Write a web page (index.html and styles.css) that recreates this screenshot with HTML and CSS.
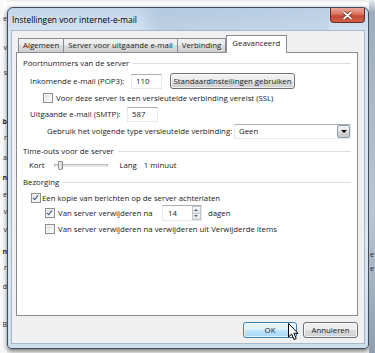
FILE: index.html
```html
<!DOCTYPE html>
<html lang="nl">
  <head>
    <meta charset="UTF-8" />
    <meta name="viewport" content="width=device-width, initial-scale=1.0" />
    <title>Instellingen voor internet-e-mail</title>
    <link rel="stylesheet" href="styles.css">
  </head>
  <body>
    <div class="screen">
      <div class="behind behind-left">
        <span>e</span>
        <span>v</span>
        <span>s</span>
        <span class="bold">b</span>
        <span>r</span>
        <span>a</span>
        <span class="bold">n</span>
        <span>e</span>
        <span>v</span>
        <span>v</span>
        <span class="bold">n</span>
        <span>r</span>
        <span>d</span>
        <span>B</span>
      </div>

      <div class="window">
        <div class="titlebar">
          <span class="title">Instellingen voor internet-e-mail</span>
          <span class="close">
            <svg width="11" height="9" viewBox="0 0 11 9">
              <path d="M1.5 1 L9.5 8 M9.5 1 L1.5 8" stroke="#5a1a10" stroke-width="3.2" />
              <path d="M1.5 1 L9.5 8 M9.5 1 L1.5 8" stroke="#fff" stroke-width="1.8" />
            </svg>
          </span>
        </div>

        <div class="client">
          <div class="tabs">
            <span class="tab">Algemeen</span>
            <span class="tab">Server voor uitgaande e-mail</span>
            <span class="tab">Verbinding</span>
            <span class="tab active">Geavanceerd</span>
          </div>

          <div class="panel">
            <div class="group-head head-ports"><span>Poortnummers van de server</span></div>

            <div class="row row-in">
              <span class="lbl lbl-in">Inkomende e-mail (POP3):</span>
              <span class="input port">110</span>
              <span class="btn btn-default">Standaardinstellingen gebruiken</span>
            </div>

            <div class="row row-ssl">
              <span class="check"></span>
              <span>Voor deze server is een versleutelde verbinding vereist (SSL)</span>
            </div>

            <div class="row row-out">
              <span class="lbl lbl-out">Uitgaande e-mail (SMTP):</span>
              <span class="input port">587</span>
            </div>

            <div class="row row-enc">
              <span>Gebruik het volgende type versleutelde verbinding:</span>
              <span class="select">
                <span class="select-value">Geen</span>
                <span class="select-arrow"></span>
              </span>
            </div>

            <div class="group-head head-time"><span>Time-outs voor de server</span></div>

            <div class="row row-slider">
              <span>Kort</span>
              <span class="slider">
                <span class="track"></span>
                <span class="thumb"></span>
              </span>
              <span>Lang</span>
              <span class="timeout">1 minuut</span>
            </div>

            <div class="group-head head-del"><span>Bezorging</span></div>

            <div class="row row-copy">
              <span class="check checked"></span>
              <span>Een kopie van berichten op de server achterlaten</span>
            </div>

            <div class="row row-days">
              <span class="check checked"></span>
              <span class="lbl lbl-days">Van server verwijderen na</span>
              <span class="spin">
                <span class="spin-value">14</span>
                <span class="spin-btns">
                  <span class="spin-up"></span>
                  <span class="spin-down"></span>
                </span>
              </span>
              <span class="days">dagen</span>
            </div>

            <div class="row row-deleted">
              <span class="check"></span>
              <span>Van server verwijderen na verwijderen uit Verwijderde items</span>
            </div>
          </div>

          <div class="actions">
            <span class="btn btn-ok">OK</span>
            <span class="btn btn-cancel">Annuleren</span>
          </div>
        </div>
      </div>

      <div class="behind behind-right">
        <span>e</span>
        <span>e</span>
      </div>

      <svg class="cursor" width="12" height="18" viewBox="0 0 12 18">
        <path d="M0.5 0.5 L0.5 14 L3.6 11 L6 16.5 L8.2 15.5 L5.9 10.3 L10 10.3 Z"
              fill="#fff" stroke="#000" stroke-width="1" stroke-linejoin="round" />
      </svg>
    </div>
  </body>
</html>
```

FILE: styles.css
```css
:root {
  --text: #202020;
  --tab-border: #898c95;
  --group-line: #d5dfe5;
  --client: #f0f0f0;
}

body {
  margin: 0;
  font-family: "Open Sans", "Noto Sans", sans-serif;
  font-size: 7.8px;
  color: var(--text);
  background: #f4f4f4;
}

.screen {
  position: relative;
  display: flex;
  width: 375px;
  height: 353px;
  overflow: hidden;
  background: linear-gradient(#ececec, #ffffff 4px, #f6f6f6 6px);
}

/* window behind the dialog */
.behind {
  display: flex;
  flex-direction: column;
  overflow: hidden;
  white-space: nowrap;
  line-height: 10px;
  font-size: 7px;
}

.behind-left {
  width: 7px;
  align-items: flex-end;
  background: linear-gradient(90deg, #f7f7f7, #ffffff);
  color: #2a2a2a;
}

.behind-left .bold {
  font-weight: bold;
}

.behind-left span:nth-child(1) { margin-top: 14px; }
.behind-left span:nth-child(2) { margin-top: 19px; }
.behind-left span:nth-child(3) { margin-top: 15px; }
.behind-left span:nth-child(4) { margin-top: 39px; }
.behind-left span:nth-child(5) { margin-top: 6px; }
.behind-left span:nth-child(6) { margin-top: 10px; }
.behind-left span:nth-child(7) { margin-top: 10px; }
.behind-left span:nth-child(8) { margin-top: 7px; }
.behind-left span:nth-child(9) { margin-top: 7px; }
.behind-left span:nth-child(10) { margin-top: 8px; }
.behind-left span:nth-child(11) { margin-top: 12px; }
.behind-left span:nth-child(12) { margin-top: 6px; }
.behind-left span:nth-child(13) { margin-top: 9px; }
.behind-left span:nth-child(14) { margin-top: 28px; }

.behind-right {
  width: 5px;
  padding-left: 1px;
  background: linear-gradient(#e8ecf0, #9eadbd 12px, #b9c6d3 60%, #8f9fb0);
  color: #222;
}

.behind-right span:nth-child(1) { margin-top: 250px; }
.behind-right span:nth-child(2) { margin-top: 4px; }

/* dialog */
.window {
  box-sizing: border-box;
  display: flex;
  flex-direction: column;
  width: 363px;
  height: 342px;
  margin-top: 7px;
  border: 1px solid #3f4d5e;
  border-radius: 6px 6px 4px 4px;
  background: linear-gradient(#c2d6ea, #d5e3f1 24px, #dbe7f3 70%, #cfdeed);
  box-shadow: 0 2px 5px rgba(0, 0, 0, 0.55);
}

.titlebar {
  display: flex;
  align-items: flex-start;
  height: 22px;
  padding-left: 4px;
  background: linear-gradient(90deg, transparent 130px, rgba(160, 185, 210, 0.45) 150px, rgba(175, 198, 222, 0.4) 320px, transparent 322px);
}

.title {
  margin-top: 5px;
  line-height: 14px;
  font-size: 8.4px;
  color: #000;
}

.close {
  display: flex;
  align-items: center;
  justify-content: center;
  box-sizing: border-box;
  width: 35px;
  height: 15px;
  margin-left: auto;
  margin-right: 3px;
  border: 1px solid #6d2a20;
  border-top: none;
  border-radius: 0 0 4px 4px;
  background: linear-gradient(#e9a99b, #d8735f 45%, #c44a33 55%, #d0604a);
}

.client {
  flex: 1;
  display: flex;
  flex-direction: column;
  margin: 0 3px 4px 3px;
  padding: 4px 6px 5px 4px;
  border: 1px solid #a9b9cb;
  background: var(--client);
}

/* tabs */
.tabs {
  display: flex;
  align-items: flex-end;
  height: 17px;
  padding-left: 2px;
}

.tab {
  box-sizing: border-box;
  height: 14px;
  padding: 0 4px;
  line-height: 13px;
  border: 1px solid var(--tab-border);
  border-bottom: none;
  border-left: none;
  background: linear-gradient(#f2f2f2, #ebebeb 50%, #dddddd 50%, #cfcfcf);
}

.tab:first-child {
  border-left: 1px solid var(--tab-border);
}

.tab.active {
  position: relative;
  z-index: 1;
  height: 18px;
  margin-bottom: -1px;
  padding: 0 6px 0 5px;
  line-height: 15px;
  border-left: 1px solid var(--tab-border);
  background: #fff;
}

.panel {
  box-sizing: border-box;
  display: flex;
  flex-direction: column;
  height: 264px;
  padding: 0 6px 0 6px;
  border: 1px solid var(--tab-border);
  background: #fff;
}

.group-head {
  display: flex;
  align-items: center;
  height: 12px;
}

.group-head::after {
  content: "";
  flex: 1;
  height: 1px;
  margin-left: 4px;
  background: var(--group-line);
}

.head-ports { margin-top: 4px; }
.head-time { margin-top: 6px; }
.head-del { margin-top: 4px; }

.row {
  display: flex;
  align-items: center;
  height: 16px;
  white-space: nowrap;
}

.row-in { margin-top: 4px; padding-left: 7px; }
.row-ssl { margin-top: 1px; padding-left: 20px; }
.row-out { padding-left: 7px; }
.row-enc { margin-top: 1px; padding-left: 24px; }
.row-slider { height: 14px; margin-top: 1px; padding-left: 6px; }
.row-copy { height: 14px; margin-top: 3px; padding-left: 8px; }
.row-days { padding-left: 22px; }
.row-deleted { height: 14px; margin-top: 1px; padding-left: 22px; }

.lbl-in { width: 101px; }
.lbl-out { width: 97px; }
.lbl-days { width: 104px; }

.input,
.select,
.spin {
  box-sizing: border-box;
  display: flex;
  align-items: center;
  height: 15px;
  border: 1px solid #e3e9ef;
  border-top-color: #abadb3;
  background: #fff;
}

.port {
  width: 31px;
  padding-left: 4px;
}

.btn {
  box-sizing: border-box;
  display: flex;
  align-items: center;
  justify-content: center;
  height: 16px;
  border: 1px solid #707070;
  border-radius: 3px;
  background: linear-gradient(#f2f2f2, #ebebeb 50%, #dddddd 50%, #cfcfcf);
  box-shadow: inset 0 0 0 1px rgba(255, 255, 255, 0.7);
}

.btn-default {
  width: 125px;
  margin-left: 8px;
}

/* checkboxes */
.check {
  box-sizing: border-box;
  display: flex;
  align-items: center;
  justify-content: center;
  width: 10px;
  height: 10px;
  margin-right: 3px;
  border: 1px solid #8e8f8f;
  background: linear-gradient(135deg, #dcdcdc, #f6f6f6 70%);
  box-shadow: inset 0 0 0 1px #f4f4f4;
}

.row-copy .check {
  margin-right: 1px;
}

.check.checked::after {
  content: "";
  width: 2px;
  height: 5px;
  margin-top: -2px;
  border: solid #3b5a8a;
  border-width: 0 1.5px 1.5px 0;
  transform: rotate(40deg);
}

/* select */
.select {
  width: 117px;
  margin-left: auto;
  padding-left: 4px;
}

.select-value {
  flex: 1;
}

.select-arrow {
  display: flex;
  align-items: center;
  justify-content: center;
  box-sizing: border-box;
  width: 13px;
  height: 13px;
  border: 1px solid #8d9aa8;
  border-radius: 2px;
  background: linear-gradient(#f4f4f4, #e2e2e2 50%, #d3d3d3 50%, #cbcbcb);
}

.select-arrow::after {
  content: "";
  border: 3px solid transparent;
  border-top: 3px solid #000;
  border-bottom: none;
  margin-top: 1px;
}

/* slider */
.slider {
  position: relative;
  width: 54px;
  height: 10px;
  margin: 0 11px 0 10px;
}

.track {
  display: block;
  margin-top: 4px;
  height: 1px;
  border: 1px solid #b7b7b7;
  border-bottom-color: #e4e4e4;
  background: #e7eaea;
}

.thumb {
  position: absolute;
  left: 4px;
  top: 1px;
  width: 3px;
  height: 7px;
  border: 1px solid #8a8a8a;
  border-radius: 1px 1px 2px 2px;
  background: linear-gradient(90deg, #f4f4f4, #d8d8d8);
}

.timeout {
  margin-left: 7px;
}

/* spinner */
.spin {
  width: 40px;
  height: 16px;
}

.spin-value {
  flex: 1;
  padding-left: 5px;
}

.spin-btns {
  display: flex;
  flex-direction: column;
  width: 9px;
  height: 14px;
}

.spin-up,
.spin-down {
  flex: 1;
  display: flex;
  align-items: center;
  justify-content: center;
  border: 1px solid #c2c7cf;
  background: linear-gradient(#f6f6f6, #e4e4e4);
}

.spin-down {
  border-top: none;
}

.spin-up::after {
  content: "";
  border: 2px solid transparent;
  border-bottom: 2px solid #4d6185;
  border-top: none;
}

.spin-down::after {
  content: "";
  border: 2px solid transparent;
  border-top: 2px solid #4d6185;
  border-bottom: none;
}

.days {
  margin-left: 6px;
}

/* dialog buttons */
.actions {
  display: flex;
  justify-content: flex-end;
  gap: 6px;
  margin-top: 6px;
}

.btn-ok {
  width: 54px;
  border-color: #3c7fb1;
  background: linear-gradient(#eaf6fd, #d9f0fc 50%, #bee6fd 50%, #a7d9f5);
}

.btn-cancel {
  width: 55px;
}

.cursor {
  position: absolute;
  left: 288px;
  top: 323px;
}
```
